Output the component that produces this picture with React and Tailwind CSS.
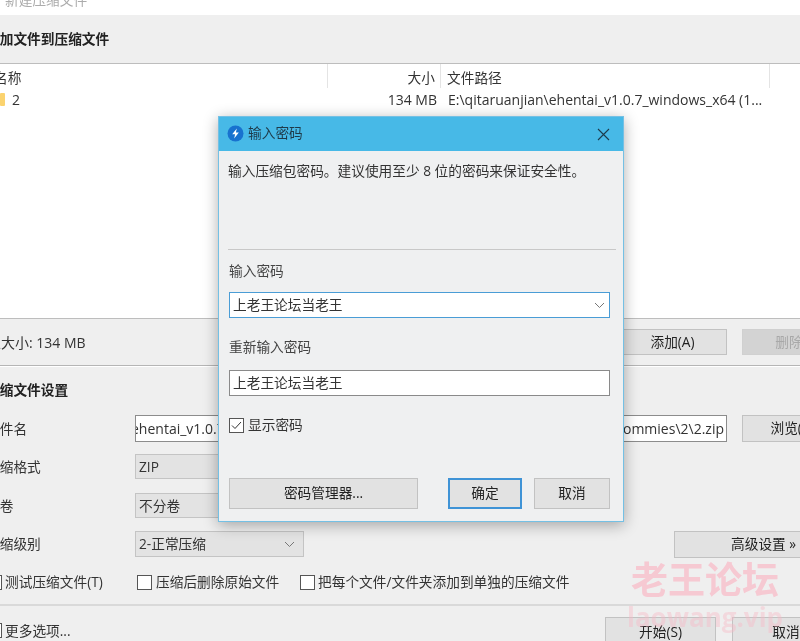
import React from "react";

const FONT = "[font-family:'Open_Sans','Noto_Sans_CJK_SC',sans-serif]";

function WinButton({ className = "", children, variant = "normal" }) {
  const look = {
    normal: "border border-[#c2c2c2] bg-[#e2e2e2] text-[#222]",
    disabled: "border border-[#d0d0d0] bg-[#d3d3d3] text-[#a8a8a8]",
    focus: "border-2 border-[#3f93d6] bg-[#e2e2e2] text-[#222]",
  }[variant];
  return (
    <div className={`flex items-center justify-center text-[13.7px] ${look} ${className}`}>
      {children}
    </div>
  );
}

function Chevron({ className = "" }) {
  return (
    <svg width="11" height="7" viewBox="0 0 11 7" fill="none" className={className}>
      <path d="M1 1l4.5 4.5L10 1" stroke="#777" strokeWidth="1" />
    </svg>
  );
}

function Select({ className = "", children, chevron }) {
  return (
    <div className={`flex items-center justify-between border border-[#c4c4c4] bg-[#e3e3e3] pl-[3px] pr-[8px] text-[13.7px] text-[#333] ${className}`}>
      <span className="pt-[1px]">{children}</span>
      {chevron && <Chevron />}
    </div>
  );
}

function CheckBox({ className = "" }) {
  return <span className={`block h-[15px] w-[15px] shrink-0 border border-[#555] bg-white ${className}`} />;
}

function SettingLabel({ children }) {
  return <div className="ml-[-14px] w-[149px] shrink-0 pt-[1px] text-[13.7px] text-[#333]">{children}</div>;
}

function Dialog() {
  return (
    <div className="absolute left-[218px] top-[116px] flex h-[406px] w-[406px] flex-col border border-[#74c0e4] bg-[#eff0f1] shadow-[0_3px_14px_rgba(0,0,0,0.32)]">
      <div className="flex h-[34px] shrink-0 items-center justify-between bg-[#47b9e7] pl-[8px] pr-[13px]">
        <div className="flex items-center gap-[4px]">
          <svg width="17" height="17" viewBox="0 0 17 17">
            <circle cx="8.5" cy="8.5" r="8" fill="#1872cf" />
            <path d="M9.8 3.4L5.2 9.2h2.9l-.9 4.3 4.6-5.9H8.9z" fill="#fff" />
          </svg>
          <span className="mt-[-1px] text-[13.7px] text-[#1f3a49]">输入密码</span>
        </div>
        <svg width="13" height="13" viewBox="0 0 13 13" fill="none">
          <path d="M1 1l11 11M12 1L1 12" stroke="#1d3b4c" strokeWidth="1.1" />
        </svg>
      </div>
      <div className="flex flex-1 flex-col pl-[10px] pr-[7px]">
        <p className="ml-[-1px] mt-[10px] h-[20px] text-[13.7px] leading-[20px] text-[#333]">输入压缩包密码。建议使用至少 8 位的密码来保证安全性。</p>
        <div className="ml-[-1px] mt-[68px] h-px bg-[#c8c8c8]" />
        <div className="mt-[11px] h-[20px] text-[13.7px] leading-[20px] text-[#444]">输入密码</div>
        <div className="mr-[6px] mt-[11px] flex h-[26px] items-center justify-between border border-[#4a9dd6] bg-white pl-[3px] pr-[4px] text-[13.7px] text-[#333]">
          <span>上老王论坛当老王</span>
          <Chevron />
        </div>
        <div className="mt-[19px] h-[20px] text-[13.7px] leading-[20px] text-[#444]">重新输入密码</div>
        <div className="mr-[6px] mt-[13px] flex h-[26px] items-center border border-[#8a8a8a] bg-white pl-[3px] text-[13.7px] text-[#333]">
          上老王论坛当老王
        </div>
        <div className="mt-[19px] flex h-[20px] items-center gap-[4px]">
          <span className="flex h-[15px] w-[15px] items-center justify-center border border-[#555] bg-white">
            <svg width="11" height="9" viewBox="0 0 11 9" fill="none">
              <path d="M1 4.5L4 7.5L10 1" stroke="#333" strokeWidth="1" />
            </svg>
          </span>
          <span className="text-[13.7px] text-[#333]">显示密码</span>
        </div>
        <div className="mr-[6px] mt-[43px] flex h-[31px]">
          <WinButton className="w-[189px]">密码管理器...</WinButton>
          <WinButton variant="focus" className="ml-[30px] w-[74px]">确定</WinButton>
          <WinButton className="ml-[12px] w-[76px]">取消</WinButton>
        </div>
      </div>
    </div>
  );
}

export default function App() {
  return (
    <div className={`relative flex h-[641px] w-[800px] flex-col overflow-hidden bg-[#efefef] blur-[0.35px] ${FONT}`}>
      {/* title bar */}
      <div className="h-[15px] shrink-0 overflow-hidden bg-white pl-[5px]">
        <div className="mt-[-9px] text-[13.7px] leading-[18px] text-[#ababab]">新建压缩文件</div>
      </div>
      {/* heading */}
      <div className="flex h-[48px] shrink-0 items-center bg-[#efefef]">
        <div className="ml-[-14px] text-[13.7px] font-bold text-[#222]">添加文件到压缩文件</div>
      </div>
      {/* file list */}
      <div className="h-[256px] shrink-0 border-y border-[#bdbdbd] bg-white text-[13.7px] text-[#333]">
        <div className="flex h-[24px] items-center">
          <div className="ml-[-6px] w-[334px] self-stretch border-r border-[#e4e4e4] leading-[27px]">名称</div>
          <div className="w-[113px] self-stretch border-r border-[#e4e4e4] pr-[5px] text-right leading-[27px]">大小</div>
          <div className="w-[329px] self-stretch border-r border-[#e4e4e4] pl-[6px] leading-[27px]">文件路径</div>
        </div>
        <div className="flex h-[23px] items-center text-[14px]">
          <svg width="5" height="13" viewBox="0 0 5 13" className="shrink-0">
            <rect width="5" height="13" rx="1" fill="#fbd36f" />
          </svg>
          <div className="ml-[7px] w-[316px]">2</div>
          <div className="w-[113px] pr-[4px] text-right">134 MB</div>
          <div className="w-[340px] whitespace-nowrap pl-[7px]">E:\qitaruanjian\ehentai_v1.0.7_windows_x64 (1...</div>
        </div>
      </div>
      {/* size row */}
      <div className="flex h-[47px] shrink-0 items-center border-b border-[#b5b5b5]">
        <div className="ml-[-13px] flex-1 text-[14px] text-[#333]">总大小: 134 MB</div>
        <WinButton className="h-[26px] w-[104px] pr-[5px]">添加(A)</WinButton>
        <WinButton variant="disabled" className="ml-[15px] mr-[-54px] h-[26px] w-[112px]">删除(D)</WinButton>
      </div>
      {/* settings */}
      <div className="flex h-[240px] shrink-0 flex-col border-b-2 border-t border-b-[#d9d9d9] border-t-white pt-[13px]">
        <div className="ml-[-14px] h-[20px] text-[13.7px] font-bold leading-[20px] text-[#222]">压缩文件设置</div>
        <div className="mt-[15px] flex h-[27px] items-center">
          <SettingLabel>文件名</SettingLabel>
          <div className="flex h-[27px] w-[592px] shrink-0 items-center justify-between overflow-hidden border border-[#8c8c8c] bg-white pr-[2px] text-[14px] text-[#333]">
            <span className="ml-[-5px] whitespace-nowrap">ehentai_v1.0.7</span>
            <span className="whitespace-nowrap">ommies\2\2.zip</span>
          </div>
          <WinButton className="ml-[15px] mr-[-64px] h-[27px] w-[112px] shrink-0">浏览(B)...</WinButton>
        </div>
        <div className="mt-[12px] flex h-[25px] items-center">
          <SettingLabel>压缩格式</SettingLabel>
          <Select className="h-[25px] w-[169px]">ZIP</Select>
        </div>
        <div className="mt-[14px] flex h-[25px] items-center">
          <SettingLabel>分卷</SettingLabel>
          <Select className="h-[25px] w-[169px]">不分卷</Select>
        </div>
        <div className="mt-[13px] flex h-[26px] items-center">
          <SettingLabel>压缩级别</SettingLabel>
          <Select chevron className="h-[26px] w-[169px]">2-正常压缩</Select>
          <WinButton className="ml-[370px] mr-[-10px] h-[27px] w-[136px] shrink-0 justify-start pl-[56px]">高级设置 »</WinButton>
        </div>
        <div className="mt-[15px] flex h-[20px] items-center text-[13.7px] text-[#333]">
          <CheckBox className="ml-[-13px]" />
          <span className="ml-[3px] w-[132px] whitespace-nowrap">测试压缩文件(T)</span>
          <CheckBox />
          <span className="ml-[4px] w-[144px] whitespace-nowrap">压缩后删除原始文件</span>
          <CheckBox />
          <span className="ml-[3px] whitespace-nowrap">把每个文件/文件夹添加到单独的压缩文件</span>
        </div>
      </div>
      {/* footer */}
      <div className="flex flex-1 items-start pt-[11px]">
        <CheckBox className="ml-[-13px] mt-[6px]" />
        <span className="ml-[3px] mt-[4px] flex-1 text-[13.7px] text-[#333]">更多选项...</span>
        <WinButton className="h-[30px] w-[111px]">开始(S)</WinButton>
        <WinButton className="ml-[16px] mr-[-40px] h-[30px] w-[108px]">取消</WinButton>
      </div>

      <Dialog />

      {/* watermark */}
      <div className="pointer-events-none absolute left-[629px] top-[556px] flex w-[152px] flex-col items-center text-[#f9b9c6] opacity-70">
        <span className="whitespace-nowrap text-[37px] font-bold leading-[48px]">老王论坛</span>
        <span className="mt-[-2px] whitespace-nowrap text-[26px] font-bold leading-[30px] opacity-60">laowang.vip</span>
      </div>
    </div>
  );
}
